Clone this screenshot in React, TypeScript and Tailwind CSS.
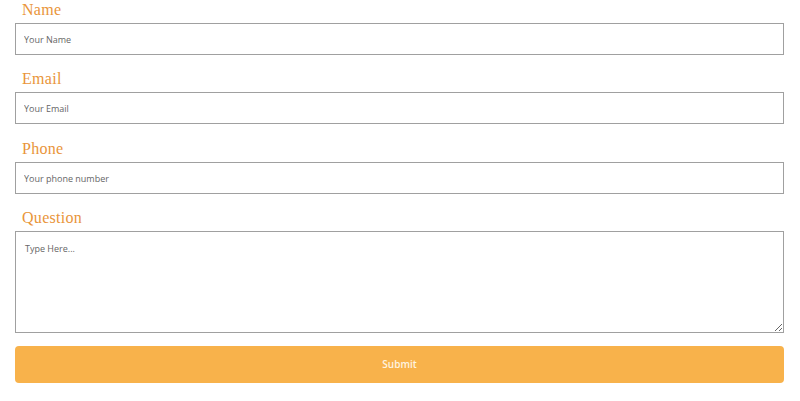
import React from "react";

const labelCls =
  "block h-[23px] pl-[7px] pt-[1px] text-[16px] leading-[18px] text-[#e9953a] font-['Liberation_Serif',serif] tracking-[0.3px]";
const inputCls =
  "block w-full h-[32px] border border-[#a0a0a0] bg-white pl-[8px] text-[9px] text-[#555] placeholder:text-[#666] font-['Open_Sans',sans-serif] outline-none";

export default function App() {
  return (
    <div className="w-[800px] h-[401px] bg-white pl-[15px] pr-[16px] overflow-hidden">
      <form className="flex flex-col" onSubmit={(e) => e.preventDefault()}>
        <label className={labelCls}>Name</label>
        <input className={inputCls} placeholder="Your Name" />
        <label className={labelCls + " mt-[14px]"}>Email</label>
        <input className={inputCls} placeholder="Your Email" />
        <label className={labelCls + " mt-[15px]"}>Phone</label>
        <input className={inputCls} placeholder="Your phone number" />
        <label className={labelCls + " mt-[14px]"}>Question</label>
        <textarea
          className="block w-full h-[102px] border border-[#a0a0a0] bg-white pl-[9px] pt-[10px] text-[9px] text-[#555] placeholder:text-[#666] font-['Open_Sans',sans-serif] outline-none"
          placeholder="Type Here..."
        />
        <button
          type="submit"
          className="mt-[13px] w-full h-[37px] rounded-[4px] bg-[#f8b24b] text-[#fff4e0] text-[10px] font-semibold font-['Open_Sans',sans-serif]"
        >
          Submit
        </button>
      </form>
    </div>
  );
}
